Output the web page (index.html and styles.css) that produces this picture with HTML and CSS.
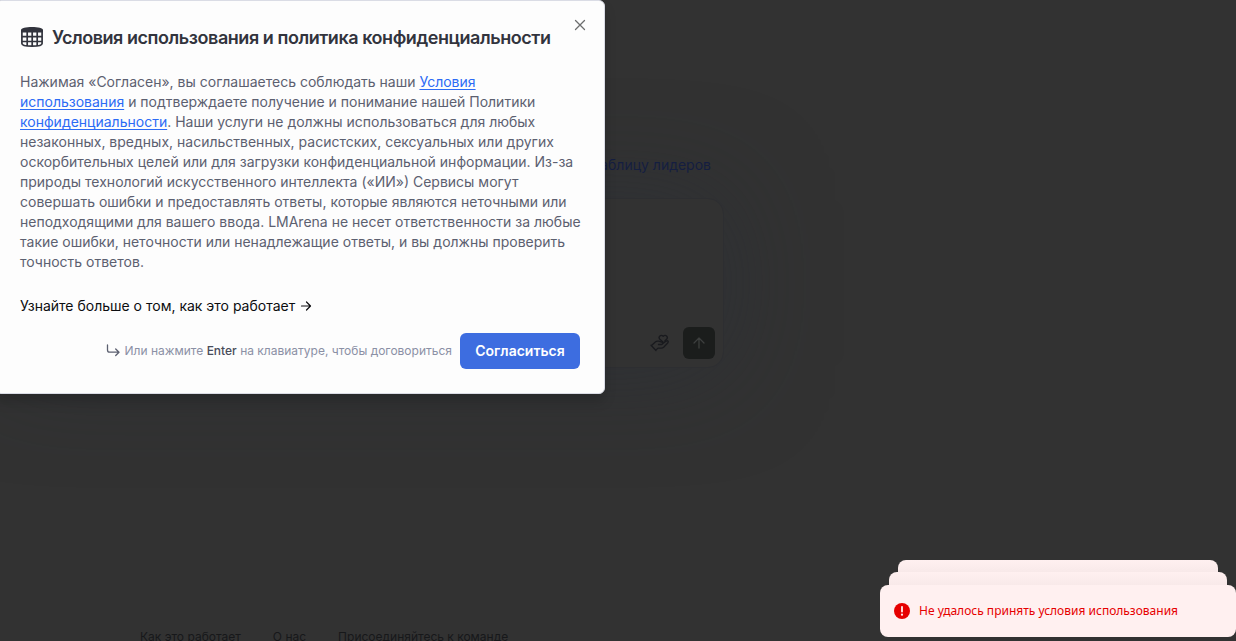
FILE: index.html
```html
<!DOCTYPE html>
<html lang="ru">
<head>
<meta charset="utf-8">
<meta name="viewport" content="width=device-width, initial-scale=1">
<title>Условия использования</title>
<link rel="stylesheet" href="styles.css">
</head>
<body>
<div class="page">
  <main class="hero">
    <a class="leaders" href="#">таблицу лидеров</a>
    <div class="composer">
      <button class="icon-button" type="button" aria-label="Обмен данными">
        <svg width="20" height="20" viewBox="0 0 20 20" fill="none" stroke="currentColor" stroke-width="1.300" stroke-linejoin="round" stroke-linecap="round"><path d="M13.200 9.300 9.600 6C8 3.900 10.700 1 13.200 3.300 15.600 1 18.500 3.800 16.800 6L14.800 8"/><path d="M1.500 12.500 5.600 8.800c1-.9 2-.9 3-.6l3.200 1c1.400.5 1 2.300-.4 2.300H8.500M12 11.200l4.200-3.100c1.500-1 2.700.3 1.700 1.700l-4 4.200c-.9.9-1.600 1.100-2.700 1.100H8L5.700 17.300M1 12.200l5 5.300"/></svg>
      </button>
      <button class="send" type="button" aria-label="Отправить">
        <svg width="16" height="16" viewBox="0 0 16 16" fill="none" stroke="currentColor" stroke-width="1.300" stroke-linecap="round" stroke-linejoin="round"><path d="M8 13V3M3 8l5-5 5 5"/></svg>
      </button>
    </div>
  </main>
  <footer class="footer">
    <a href="#">Как это работает</a>
    <a href="#">О нас</a>
    <a href="#">Присоединяйтесь к команде</a>
  </footer>
</div>

<section class="dialog" role="dialog" aria-labelledby="terms-title">
  <button class="close" type="button" aria-label="Закрыть">
    <svg width="12" height="12" viewBox="0 0 12 12" fill="none" stroke="currentColor" stroke-width="1.300" stroke-linecap="round"><path d="M1.500 1.500l9 9M10.500 1.500l-9 9"/></svg>
  </button>
  <header class="dialog-head">
    <svg width="24" height="24" viewBox="0 0 24 24" aria-hidden="true"><path fill="currentColor" d="M1 4C1 2.200 6 1 12 1s11 1.200 11 3v2.500H1Z"/><path fill="none" stroke="currentColor" stroke-width="1.700" d="M1.900 4v13.500c0 1.800 4 2.700 10.100 2.700s10.100-.9 10.100-2.700V4M7.200 5v15M12.200 5v15M17.200 5v15M1.900 10.700h20.200M1.900 15.500h20.200"/></svg>
    <h2 id="terms-title">Условия использования и политика конфиденциальности</h2>
  </header>
  <p class="terms">Нажимая «Согласен», вы соглашаетесь соблюдать наши <a href="#">Условия использования</a> и подтверждаете получение и понимание нашей Политики <a href="#">конфиденциальности</a>. Наши услуги не должны использоваться для любых незаконных, вредных, насильственных, расистских, сексуальных или других оскорбительных целей или для загрузки конфиденциальной информации. Из-за природы технологий искусственного интеллекта («ИИ») Сервисы могут совершать ошибки и предоставлять ответы, которые являются неточными или неподходящими для вашего ввода. LMArena не несет ответственности за любые такие ошибки, неточности или ненадлежащие ответы, и вы должны проверить точность ответов.</p>
  <a class="more" href="#">Узнайте больше о том, как это работает
    <svg width="12" height="12" viewBox="0 0 12 12" fill="none" stroke="currentColor" stroke-width="1.200" stroke-linecap="round" stroke-linejoin="round"><path d="M1.500 6h9M6.500 2l4 4-4 4"/></svg>
  </a>
  <div class="actions">
    <svg class="enter" width="14" height="14" viewBox="0 0 14 14" fill="none" stroke="currentColor" stroke-width="1.300" stroke-linecap="round" stroke-linejoin="round"><path d="M1.500 1v5c0 1.500.7 2.200 2.200 2.200H13M9.700 5l3.300 3.200-3.300 3.300"/></svg>
    <span class="hint">Или нажмите <b>Enter</b> на клавиатуре, чтобы договориться</span>
    <button class="agree" type="button">Согласиться</button>
  </div>
</section>

<div class="toasts" role="status">
  <div class="toast-back far"></div>
  <div class="toast-back near"></div>
  <div class="toast">
    <svg width="16" height="16" viewBox="0 0 16 16" aria-hidden="true"><circle cx="8" cy="8" r="8" fill="#e60000"/><path d="M8 3.800v4.800" stroke="#fff0f0" stroke-width="1.800" stroke-linecap="round"/><circle cx="8" cy="11.700" r="1.100" fill="#fff0f0"/></svg>
    <span>Не удалось принять условия использования</span>
  </div>
</div>
</body>
</html>
```
FILE: styles.css
```css
* { box-sizing: border-box; }
body {
  margin: 0;
  overflow: hidden;
  background: #323232;
  font-family: Inter, "Noto Sans", sans-serif;
  font-size: 14px;
  line-height: 20px;
}
button { padding: 0; border: 0; background: none; font: inherit; }
svg { display: block; flex: none; }
a { text-decoration: none; }

.page { display: flex; flex-direction: column; height: 100vh; }
.hero {
  display: flex;
  flex: 1;
  flex-direction: column;
  align-items: flex-end;
  gap: 23px;
  width: 724px;
  padding-top: 155px;
}
.leaders { padding-right: 13px; color: #131d42; }
.composer {
  display: flex;
  align-items: flex-end;
  justify-content: flex-end;
  gap: 11px;
  width: 100%;
  height: 170px;
  padding: 8px;
  border: 1px solid #2d2e31;
  border-radius: 16px;
  background: #323232;
  box-shadow: 0 0 100px rgba(42, 47, 58, .5);
}
.icon-button { display: grid; place-items: center; width: 24px; height: 32px; color: #191a1e; }
.send {
  display: grid;
  place-items: center;
  width: 32px;
  height: 32px;
  border-radius: 6px;
  background: #1b1d1c;
  color: #3d3f3e;
}
.footer {
  display: flex;
  gap: 32px;
  height: 14px;
  padding-left: 140px;
  font-size: 12px;
}
.footer a { color: #17181a; white-space: nowrap; }

.dialog {
  position: absolute;
  top: 0;
  left: -5px;
  width: 610px;
  max-width: 100vw;
  padding: 24px;
  border: 1px solid #dadce5;
  border-radius: 6px;
  background: #fdfdfd;
  box-shadow: 0 8px 12px rgba(0, 0, 0, .15);
}
.close {
  position: absolute;
  top: 16px;
  right: 16px;
  display: grid;
  place-items: center;
  width: 16px;
  height: 16px;
  color: #6c6d6e;
}
.dialog-head { display: flex; align-items: center; gap: 8px; color: #32343d; }
.dialog-head h2 { margin: 0; font-size: 18px; line-height: 26px; font-weight: 600; white-space: nowrap; letter-spacing: -0.025em; }
.terms { margin: 21px -2px 24px 0; color: #5c6070; }
.terms a {
  color: #2c6bf5;
  text-decoration: underline 1px;
  text-decoration-skip-ink: none;
  text-underline-offset: 2px;
}
.more { display: flex; align-items: center; gap: 5px; color: #0c0d10; }
.actions { display: flex; align-items: center; justify-content: flex-end; margin-top: 17px; }
.enter { margin-right: 5px; color: #5c6070; }
.hint { margin-right: 8px; color: #8b90a5; font-size: 12px; line-height: 18px; }
.hint b { color: #484c5a; font-weight: 500; }
.agree {
  width: 120px;
  height: 36px;
  border-radius: 6px;
  background: #3d6de0;
  color: #fff;
  font-weight: 600;
}

.toasts {
  position: absolute;
  right: 0;
  bottom: 4px;
  display: flex;
  flex-direction: column;
  align-items: center;
  width: 356px;
}
.toast-back { border-radius: 8px 8px 0 0; background: linear-gradient(#fff0f0, #f8e9e9); }
.far { width: 320px; height: 12px; }
.near { width: 338px; height: 13px; }
.toast {
  display: flex;
  align-items: center;
  gap: 9px;
  width: 100%;
  height: 52px;
  padding: 0 14px;
  border-radius: 8px;
  background: #fff0f0;
  color: #e60000;
  font-family: "Noto Sans", sans-serif;
  font-size: 12px;
}
```
